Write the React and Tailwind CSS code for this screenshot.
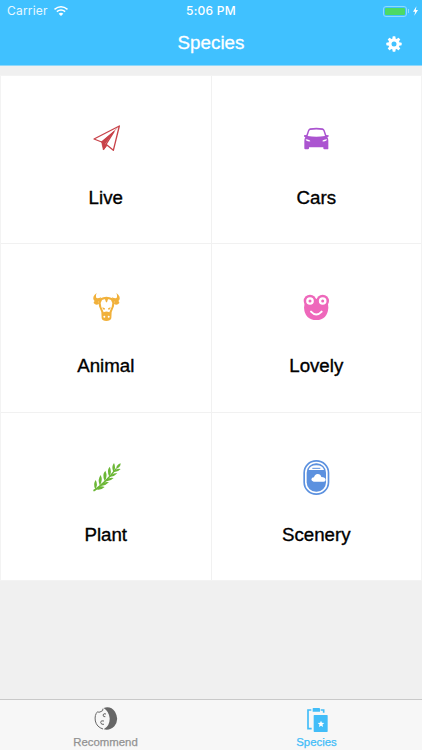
import React, { useState } from 'react';

const PlaneIcon = () => (
  <svg viewBox="0 0 150 150" className="w-[50px] h-[50px]" fill="none" stroke="#c8434a" strokeWidth="4" strokeLinejoin="round">
    <path d="M115 33 L39 72 L62 81 L99 50 L75 88 L97 106 Z" />
    <path d="M115 33 L62 81 L68 106 L78 92 L73 87 L99 50 Z" fill="#c8434a" stroke="none" />
    <path d="M62 81 L67 105 L77 91" fill="#c8434a" strokeWidth="2" />
  </svg>
);

const CarIcon = () => (
  <svg viewBox="0 0 150 150" className="w-[50px] h-[50px]" fill="#ab54d0">
    <path fillRule="evenodd" d="M57 40 Q76 37 95 40 Q99 41 101 46 L106 60 L113 61 Q115 66 109 67 Q112 71 112 77 V101 Q112 103 109 103 H100 Q97 103 97 100 V97 H54 V100 Q54 103 51 103 H43 Q40 103 40 100 V77 Q40 71 43 67 Q37 66 39 61 L46 60 L51 46 Q53 41 57 40 Z M58 45 Q55 46 54 50 L50 63 Q76 68 102 63 L98 50 Q97 46 94 45 Q76 42 58 45 Z M44 73 Q45 80 58 79 Q57 74 44 73 Z M108 73 Q95 74 94 79 Q107 80 108 73 Z" />
  </svg>
);

const BullIcon = () => (
  <svg viewBox="0 0 150 150" className="w-[50px] h-[50px]" fill="#f1b13b">
    <path d="M47 30 Q33 41 38 51 Q43 59 57 54 L60 43 Q45 49 45 41 Q44 36 47 30 Z" />
    <path d="M106 30 Q120 41 115 51 Q110 59 96 54 L93 43 Q108 49 108 41 Q109 36 106 30 Z" />
    <path d="M52 51 Q37 53 38 60 Q44 68 54 63 Z M101 51 Q116 53 115 60 Q109 68 99 63 Z" />
    <path d="M58 46 Q76 37 95 46 L100 56 L99 70 L92 87 L91 106 Q88 114 76 114 Q64 114 62 106 L61 87 L54 70 L53 56 Z" />
    <path d="M63 51 Q70 48 72 49 L75 58 L78 58 L81 49 Q84 48 90 51 L94 60 L92 72 L85 88 Q76 83 68 88 L61 72 L59 60 Z" fill="#fff" />
    <path d="M64 73 L72 76 L70 81 Q64 79 64 73 Z M89 73 L81 76 L83 81 Q89 79 89 73 Z" />
    <circle cx="70" cy="101" r="3" fill="#fff" />
    <circle cx="83" cy="101" r="3" fill="#fff" />
  </svg>
);

const FrogIcon = () => (
  <svg viewBox="0 0 150 150" className="w-[50px] h-[50px]" fill="#ee68bb">
    <circle cx="57" cy="54" r="19" />
    <circle cx="95" cy="54" r="19" />
    <path d="M44 54 Q76 42 108 54 Q112 62 112 74 Q109 111 76 111 Q42 111 39 74 Q39 63 44 54 Z" />
    <circle cx="57" cy="54" r="8" stroke="#fff" strokeWidth="7" />
    <circle cx="95" cy="54" r="8" stroke="#fff" strokeWidth="7" />
    <path d="M60 86 Q76 103 92 86" fill="none" stroke="#fff" strokeWidth="6" strokeLinecap="round" />
  </svg>
);

const LeafIcon = () => (
  <svg viewBox="0 0 150 150" className="w-[50px] h-[50px]" fill="#6cb736">
    <path d="M37 118 Q35 112 41 111 Q73 89 104 49 L107 51 Q78 91 41 118 Z" />
    <path d="M105 51 Q107 37 119 34 Q119 47 105 51 Z" />
    <path d="M44 84 Q35 97 43 111 Q52 98 44 84 Z M43 111 Q58 117 71 105 Q56 99 43 111 Z" />
    <path d="M59 69 Q49 82 56 100 Q67 86 59 69 Z M56 100 Q71 104 84 91 Q69 87 56 100 Z" />
    <path d="M73 56 Q62 68 71 87 Q81 73 73 56 Z M71 87 Q85 91 98 78 Q83 74 71 87 Z" />
    <path d="M86 44 Q76 56 85 74 Q94 60 86 44 Z M85 74 Q98 76 109 64 Q95 61 85 74 Z" />
    <path d="M99 33 Q90 44 97 60 Q106 47 99 33 Z M97 60 Q109 62 119 51 Q106 48 97 60 Z" />
  </svg>
);

const WindowIcon = () => (
  <svg viewBox="0 0 150 150" className="w-[50px] h-[50px]" fill="#5c91df">
    <rect x="39.5" y="26.5" width="73" height="100" rx="36" fill="none" stroke="#5c91df" strokeWidth="5" />
    <rect x="47" y="34" width="58" height="85" rx="28" />
    <path d="M53 54 Q56 40 76 40 Q96 40 99 54 Z" fill="#fff" />
    <path d="M64 49 H88" stroke="#5c91df" strokeWidth="3" />
    <path d="M68 89 Q61 88 61 82 Q62 76 69 76 Q71 67 80 66 Q89 66 91 75 Q103 75 104 83 Q104 89 98 89 Z" fill="#fff" />
  </svg>
);

const MoonIcon = () => (
  <svg viewBox="0 0 72 72" className="w-6 h-6" fill="none" stroke="#666" strokeWidth="3">
    <path d="M29 3 Q50 -4 63 14 Q77 38 61 58 Q47 72 29 67 Q48 57 47 34 Q45 13 29 3 Z" fill="#666" stroke="none" />
    <path d="M27 5 Q29 12 18 15 Q14 17 11 14 Q1 23 4 42 Q8 60 27 66" />
    <path d="M36 21 Q28 18 27 24 Q28 31 34 29 M30 42 Q20 39 20 46 Q21 54 30 52" />
    <path d="M70 21 V24 M70 46 V48" stroke="#f7f7f7" strokeWidth="2" />
  </svg>
);

const ClipboardIcon = () => (
  <svg viewBox="0 0 72 78" className="w-6 h-[26px]" fill="#42bdf8">
    <path d="M19 9 H9 V65 H20 M47 9 H56 V17" fill="none" stroke="#42bdf8" strokeWidth="5" />
    <path d="M23 5 Q23 3 25 3 H43 Q45 3 45 5 V14 H23 Z" />
    <rect x="26" y="24" width="42" height="51" rx="2" />
    <path d="M48 41 L50.8 47.5 L58 48 L52.5 52.5 L54.2 60 L48 56 L41.8 60 L43.5 52.5 L38 48 L45.2 47.5 Z" fill="#fff" />
  </svg>
);

const GearIcon = () => (
  <svg viewBox="0 0 48 48" className="w-4 h-4" fill="#fff">
    {[0, 45, 90, 135].map(angle => (
      <rect key={angle} x="19.5" y="1" width="9" height="46" rx="2" transform={`rotate(${angle} 24 24)`} />
    ))}
    <circle cx="24" cy="24" r="17" />
    <circle cx="24" cy="24" r="7.5" fill="#40c1ff" />
  </svg>
);

const WifiIcon = () => (
  <svg viewBox="0 0 42 30" className="w-3.5 h-2.5" fill="none" stroke="#fff" strokeWidth="4.5">
    <path d="M1.5 10 Q21 -5 40.5 10 M8.5 17 Q21 7 33.5 17" />
    <path d="M14 23 Q21 17 28 23 L21 30 Z" fill="#fff" stroke="none" />
  </svg>
);

const species = [
  { name: 'Live', Icon: PlaneIcon },
  { name: 'Cars', Icon: CarIcon },
  { name: 'Animal', Icon: BullIcon },
  { name: 'Lovely', Icon: FrogIcon },
  { name: 'Plant', Icon: LeafIcon },
  { name: 'Scenery', Icon: WindowIcon },
];

const tabs = [
  { name: 'Recommend', Icon: MoonIcon },
  { name: 'Species', Icon: ClipboardIcon },
];

const App = () => {
  const [activeTab, setActiveTab] = useState('Species');

  return (
    <div className="flex flex-col h-[750px] w-[422px] overflow-hidden bg-[#f0f0f0] font-['Liberation_Sans',sans-serif]">
      <header className="h-[66px] bg-[#40c1ff] border-b border-[#8fd8fa] text-white">
        {/* Status bar */}
        <div className="grid grid-cols-3 items-center h-[22px] px-[7px] font-['Inter',sans-serif] text-[12px]">
          <div className="flex items-center gap-1.5">
            <span className="tracking-[0.2px] text-[#e8f8ff]">Carrier</span>
            <WifiIcon />
          </div>
          <span className="text-center font-medium tracking-[0.25px]">5:06 PM</span>
          <div className="flex items-center justify-end -mr-[3px]">
            <div className="w-6 h-[11px] rounded-[3px] border border-[#8edbff] p-px">
              <div className="h-full rounded-[1px] bg-[#4cd964]" />
            </div>
            <div className="w-px h-1 ml-px mr-1 bg-[#8edbff]" />
            <svg viewBox="0 0 16 30" className="w-[5px] h-[10px]" fill="#fff">
              <path d="M11 0 L0 17 H7 L4 30 L16 12 H9 Z" />
            </svg>
          </div>
        </div>

        {/* Title */}
        <div className="grid grid-cols-[48px_1fr_48px] items-center h-[43px]">
          <h1 className="col-start-2 text-center text-[18.8px] leading-none [-webkit-text-stroke:0.3px_white]">Species</h1>
          <button className="pl-3" aria-label="Settings"><GearIcon /></button>
        </div>
      </header>

      {/* Category grid */}
      <main className="flex-1 pt-[9px]">
        <div className="grid grid-cols-2 grid-rows-3 h-[506px] gap-px border border-[#f3f3f3] bg-[#f1f1f1]">
          {species.map(({ name, Icon }) => (
            <button key={name} className="flex flex-col items-center pt-[39px] bg-white">
              <Icon />
              <span className="mt-[21px] text-[18.7px] leading-6 text-black [-webkit-text-stroke:0.35px_black]">{name}</span>
            </button>
          ))}
        </div>
      </main>

      {/* Tab bar */}
      <nav className="grid grid-cols-2 h-[51px] border-t border-[#c9c9c9] bg-[#f7f7f7]">
        {tabs.map(({ name, Icon }) => (
          <button key={name} onClick={() => setActiveTab(name)} className="flex flex-col items-center pt-[7px]">
            <div className="h-[27px]"><Icon /></div>
            <span className={`text-[11.4px] leading-4 ${activeTab === name ? 'text-[#42bdf8] [-webkit-text-stroke:0.25px_#42bdf8]' : 'text-[#929292] [-webkit-text-stroke:0.25px_#929292]'}`}>
              {name}
            </span>
          </button>
        ))}
      </nav>
    </div>
  );
};

export default App;
